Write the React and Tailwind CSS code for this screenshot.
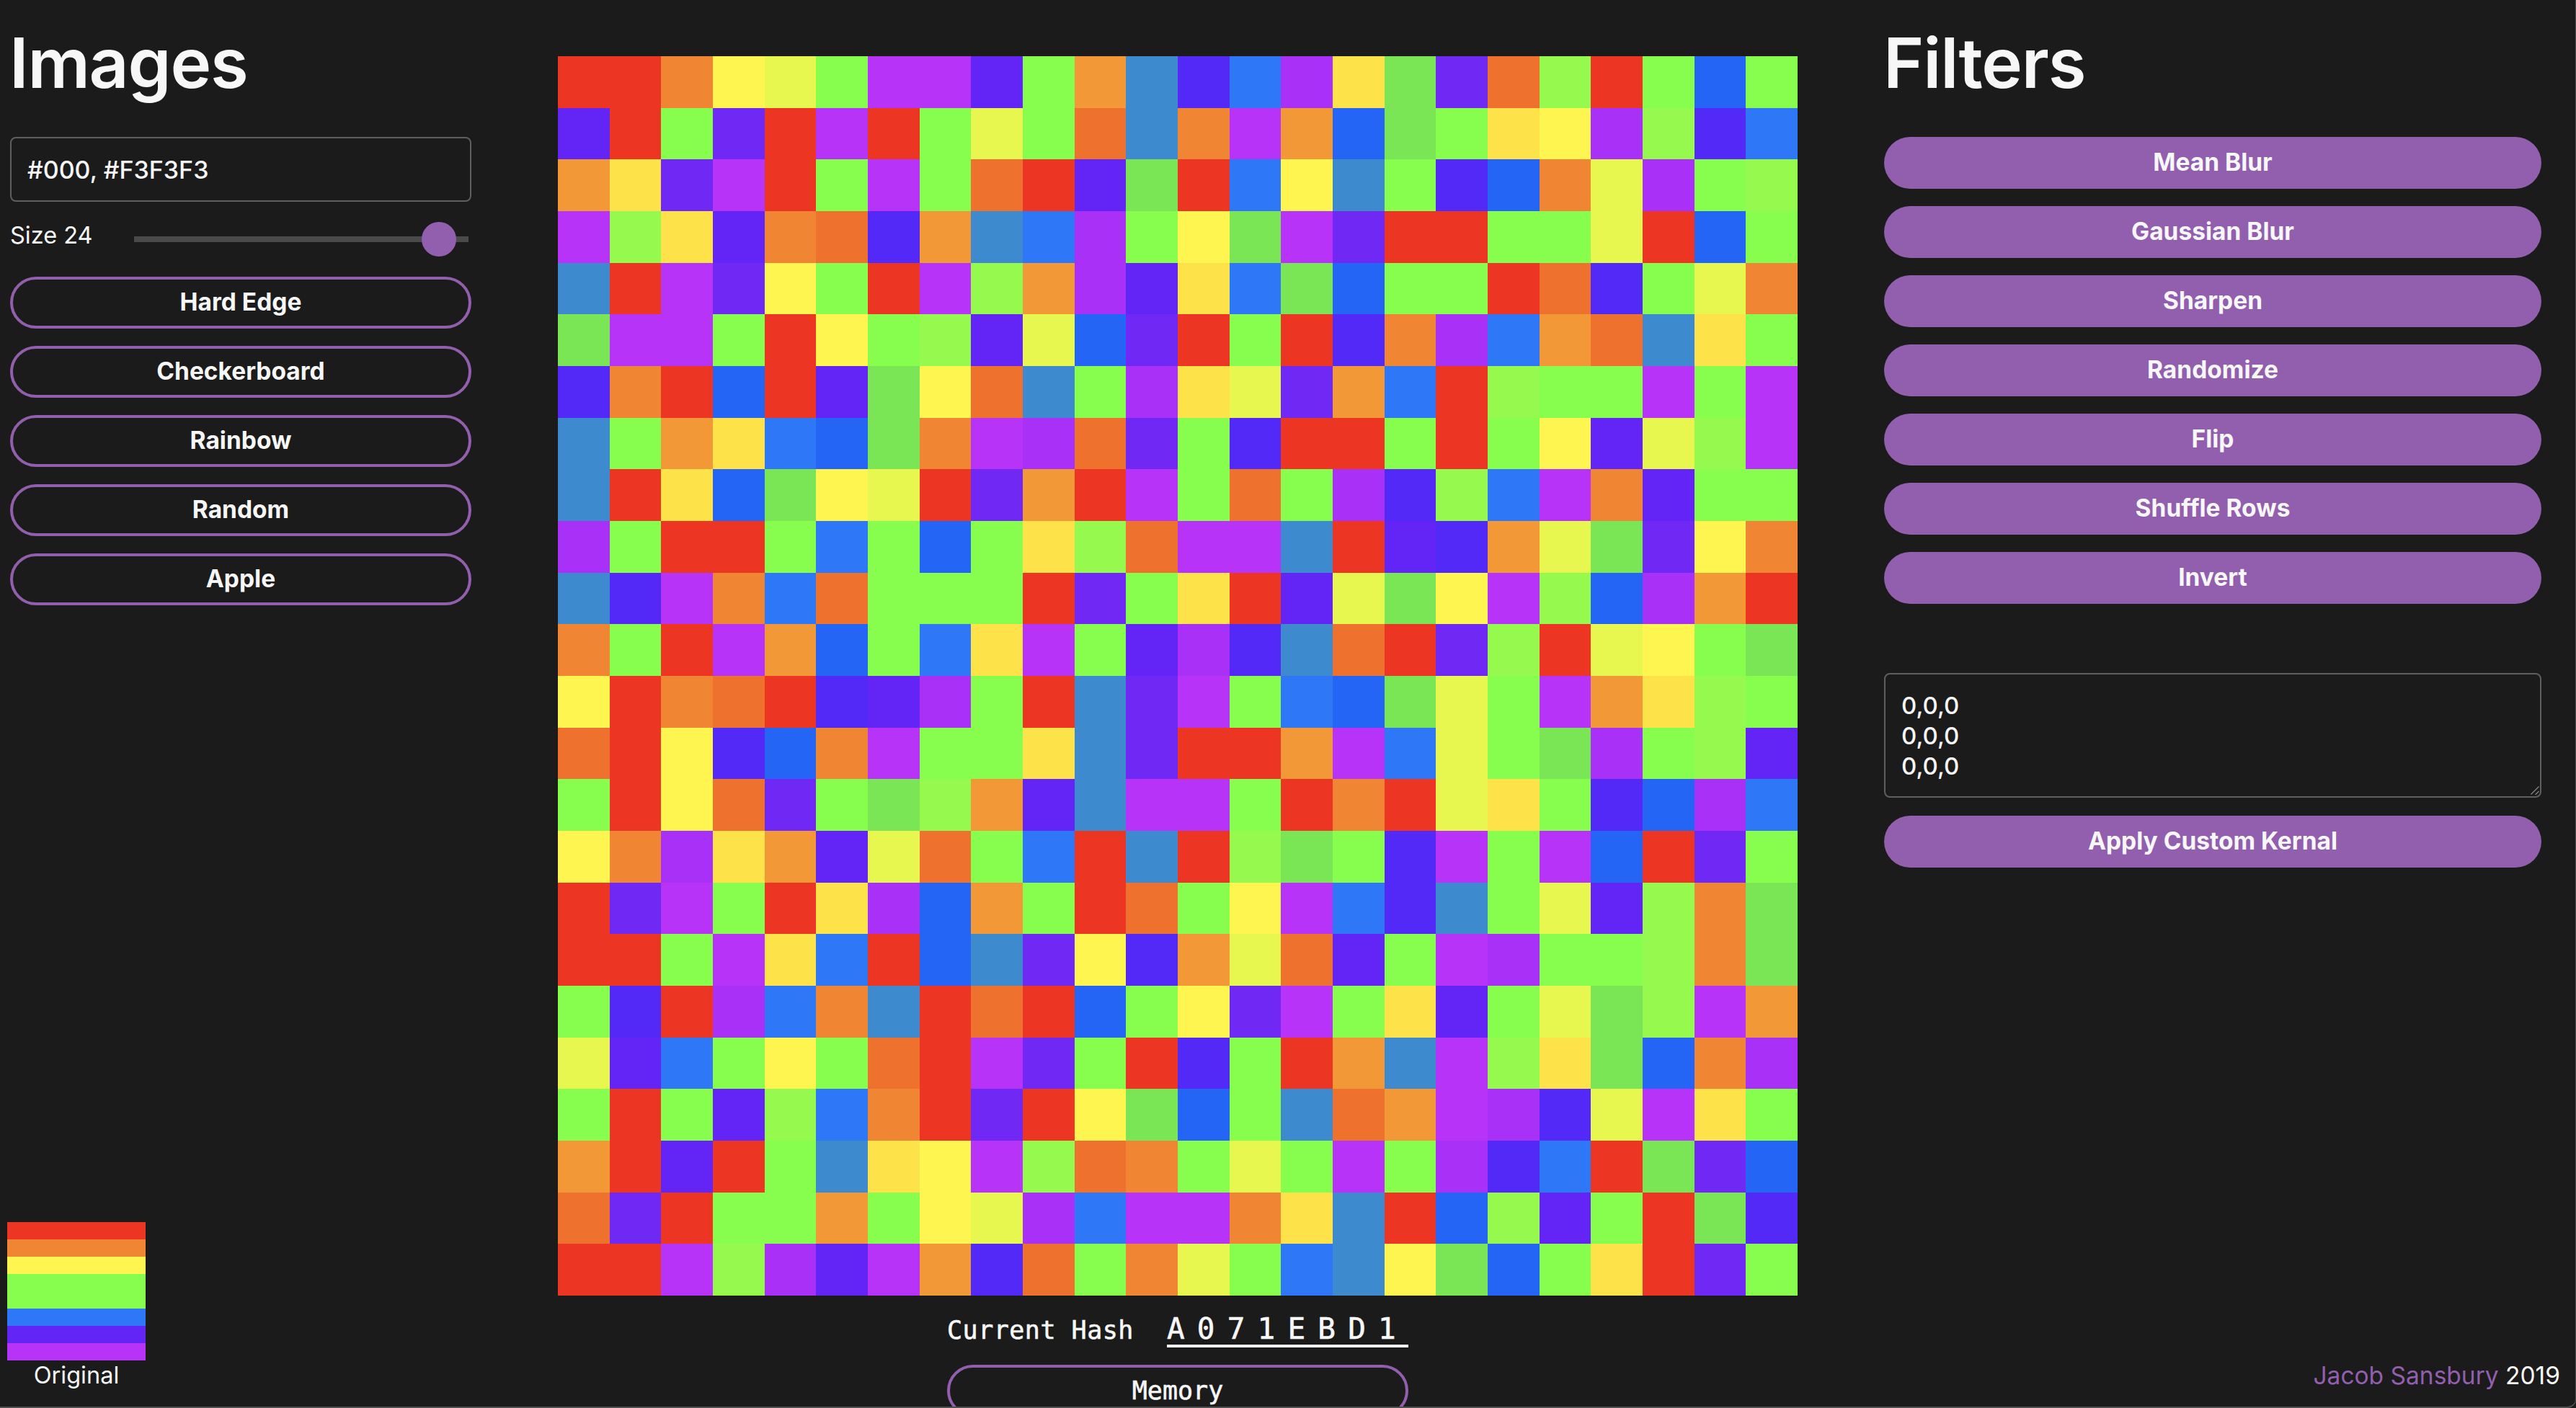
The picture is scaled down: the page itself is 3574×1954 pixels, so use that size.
const COLORS = {
  R: "bg-[#ec3523]",
  O: "bg-[#f08534]",
  o: "bg-[#ef712e]",
  A: "bg-[#f29837]",
  Y: "bg-[#fff550]",
  y: "bg-[#fde24a]",
  L: "bg-[#e8f650]",
  G: "bg-[#87fd4e]",
  g: "bg-[#95fa4d]",
  D: "bg-[#7ae655]",
  B: "bg-[#2e77f6]",
  b: "bg-[#2465f5]",
  S: "bg-[#3e8ace]",
  I: "bg-[#5229f6]",
  V: "bg-[#6225f5]",
  v: "bg-[#7028f5]",
  P: "bg-[#b733f8]",
  p: "bg-[#a930f6]",
};

const ROWS = [
  "RROYLGPPVGASIBpyDvogRGbG",
  "VRGvRPRGLGoSOPAbDGyYpgIB",
  "AyvPRGPGoRVDRBYSGIbOLpGg",
  "PgyVOoIASBpGYDPvRRGGLRbG",
  "SRPvYGRPgApVyBDbGGRoIGLO",
  "DPPGRYGgVLbvRGRIOpBAoSyG",
  "IORbRVDYoSGpyLvABRgGGPGP",
  "SGAyBbDOPpovGIRRGRGYVLgP",
  "SRybDYLRvARPGoGpIgBPOVGG",
  "pGRRGBGbGygoPPSRVIALDvYO",
  "SIPOBoGGGRvGyRVLDYPgbpAR",
  "OGRPAbGByPGVpISoRvgRLYGD",
  "YROoRIVpGRSvPGBbDLGPAygG",
  "oRYIbOPGGySvRRAPBLGDpGgV",
  "GRYovGDgAVSPPGRORLyGIbpB",
  "YOpyAVLoGBRSRgDGIPGPbRvG",
  "RvPGRypbAGRoGYPBISGLVgOD",
  "RRGPyBRbSvYIALoVGPpGGgOD",
  "GIRpBOSRoRbGYvPGyVGLDgPA",
  "LVBGYGoRPvGRIGRASPgyDbOp",
  "GRGVgBORvRYDbGSoAPpILPyG",
  "ARVRGSyYPgoOGLGPGpIBRDvb",
  "ovRGGAGYLpBPPOySRbgVGRDI",
  "RRPgpVPAIoGOLGBSYDbGyRvG",
];

const STRIPES = ["R", "O", "Y", "G", "G", "B", "V", "P"];
const IMAGE_BUTTONS = ["Hard Edge", "Checkerboard", "Rainbow", "Random", "Apple"];
const FILTER_BUTTONS = ["Mean Blur", "Gaussian Blur", "Sharpen", "Randomize", "Flip", "Shuffle Rows", "Invert"];

function OutlineButton({ children }) {
  return (
    <button className="block h-[72px] w-[640px] shrink-0 rounded-full border-4 border-[#925fae] pb-[2px] text-[33.5px] font-bold text-[#f7f7f7]">
      {children}
    </button>
  );
}

function FilledButton({ children }) {
  return (
    <button className="block h-[72px] w-[912px] rounded-full bg-[#925fae] pb-[2px] text-[33.5px] font-bold text-[#f7f7f7]">
      {children}
    </button>
  );
}

function ImagesPanel() {
  return (
    <div className="flex h-full w-[640px] shrink-0 flex-col">
      <h1 className="-ml-px pt-[29px] text-[96px] leading-[116px] font-semibold tracking-[-1.2px] text-[#f7f7f7]">Images</h1>
      <input
        defaultValue="#000, #F3F3F3"
        className="mt-[45px] h-[90px] w-full rounded-lg border-2 border-[#5f5f5f] bg-transparent pl-[22px] text-[34px] font-medium text-[#f7f7f7] outline-none"
      />
      <div className="mt-[28px] flex h-[48px] items-center">
        <span className="w-[172px] pb-[10px] text-[32.5px] text-[#f7f7f7]">Size 24</span>
        <input
          type="range"
          min="0"
          max="25"
          defaultValue="24"
          className="h-2 w-[464px] appearance-none bg-[#4a4a4a] [&::-webkit-slider-thumb]:h-12 [&::-webkit-slider-thumb]:w-12 [&::-webkit-slider-thumb]:appearance-none [&::-webkit-slider-thumb]:rounded-full [&::-webkit-slider-thumb]:bg-[#925fae]"
        />
      </div>
      <div className="mt-[28px] flex flex-col gap-6">
        {IMAGE_BUTTONS.map((label) => (
          <OutlineButton key={label}>{label}</OutlineButton>
        ))}
      </div>
      {/* Original thumbnail */}
      <div className="mt-auto -ml-1 w-[192px] pb-[22px]">
        <div className="h-[192px] w-[192px]">
          {STRIPES.map((c, i) => (
            <div key={i} className={`h-6 ${COLORS[c]}`} />
          ))}
        </div>
        <div className="text-center text-[32.5px] leading-[42px] text-[#f7f7f7]">Original</div>
      </div>
    </div>
  );
}

function Canvas() {
  return (
    <div className="ml-[120px] flex h-full w-[1720px] shrink-0 flex-col items-center pt-[78px]">
      <div className="grid h-[1720px] w-[1720px] shrink-0 grid-cols-[repeat(24,1fr)] grid-rows-[repeat(24,1fr)]">
        {ROWS.map((row, r) =>
          row.split("").map((c, i) => <div key={`${r}-${i}`} className={COLORS[c]} />)
        )}
      </div>
      <div className="flex w-[640px] shrink-0 justify-between pt-[24px] font-['DejaVu_Sans_Mono',monospace] text-[#f7f7f7] [-webkit-text-stroke:0.6px_#f7f7f7]">
        <span className="self-end pb-[2px] text-[35px] leading-[44px] tracking-[0.5px]">Current Hash</span>
        <span className="border-b-4 border-[#f7f7f7] text-[41px] leading-[44px] tracking-[17.2px]">A071EBD1</span>
      </div>
      <button className="mt-[24px] h-[72px] w-[640px] shrink-0 rounded-full border-4 border-[#925fae] font-['DejaVu_Sans_Mono',monospace] text-[35px] text-[#f7f7f7] [-webkit-text-stroke:0.6px_#f7f7f7]">
        Memory
      </button>
    </div>
  );
}

function FiltersPanel() {
  return (
    <div className="ml-[120px] flex h-full flex-1 flex-col">
      <h1 className="-ml-px pt-[29px] text-[96px] leading-[116px] font-semibold tracking-[-1.2px] text-[#f7f7f7]">Filters</h1>
      <div className="mt-[45px] flex flex-col gap-6">
        {FILTER_BUTTONS.map((label) => (
          <FilledButton key={label}>{label}</FilledButton>
        ))}
      </div>
      <div className="relative mt-[96px] h-[173px] w-[912px]">
        <textarea
          defaultValue={"0,0,0\n0,0,0\n0,0,0"}
          className="block h-full w-full resize-none rounded-lg border-2 border-[#5f5f5f] bg-transparent pt-[22px] pl-[22px] text-[33px] leading-[42px] font-medium text-[#f7f7f7] outline-none"
        />
        {/* resize grip */}
        <svg className="absolute right-[3px] bottom-[4px] h-[12px] w-[12px]" viewBox="0 0 12 12" fill="none" stroke="#8a8a8a" strokeWidth="1.2">
          <path d="M11.5 0.5 L0.5 11.5 M11.5 7 L6.5 12" />
        </svg>
      </div>
      <div className="mt-[25px]">
        <FilledButton>Apply Custom Kernal</FilledButton>
      </div>
      <div className="mt-auto self-end pr-[21px] pb-[22px] text-[33.5px] leading-[42px] text-[#f7f7f7]">
        <span className="text-[#925fae]">Jacob Sansbury</span> 2019
      </div>
    </div>
  );
}

export default function App() {
  return (
    <div className="h-[1954px] w-[3574px] overflow-hidden bg-[#1b1b1b]">
      <div className="flex h-full overflow-hidden rounded-br-[12px] border-r border-b-2 border-[#4f4f4f] pl-[14px] font-['Inter',sans-serif]">
        <ImagesPanel />
        <Canvas />
        <FiltersPanel />
      </div>
    </div>
  );
}
